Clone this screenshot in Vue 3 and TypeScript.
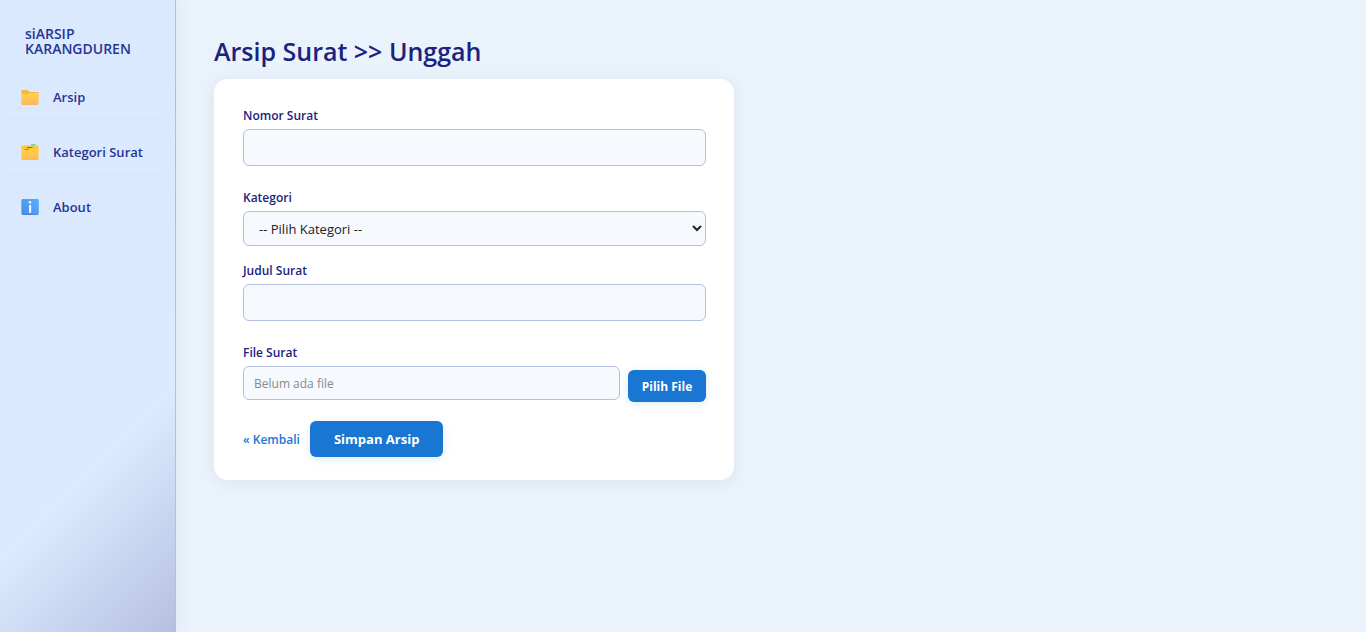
<script setup lang="ts">
import { ref } from 'vue'

interface NavItem {
  label: string
  icon: 'folder' | 'dividers' | 'info'
}

const navItems: NavItem[] = [
  { label: 'Arsip', icon: 'folder' },
  { label: 'Kategori Surat', icon: 'dividers' },
  { label: 'About', icon: 'info' },
]

const nomor = ref('')
const kategori = ref('')
const judul = ref('')
const fileName = ref('')
const picker = ref<HTMLInputElement | null>(null)

function onPick(event: Event) {
  const files = (event.target as HTMLInputElement).files
  fileName.value = files && files.length ? files[0].name : ''
}
</script>

<template>
  <div class="layout">
    <aside class="sidebar">
      <div class="brand">siARSIP<br />KARANGDUREN</div>
      <nav class="nav">
        <a v-for="item in navItems" :key="item.label" href="#" class="nav-link">
          <svg v-if="item.icon === 'folder'" class="nav-icon" viewBox="0 0 18 18" aria-hidden="true">
            <defs>
              <linearGradient id="folderFront" x1="0" y1="0" x2="0" y2="1">
                <stop offset="0" stop-color="#ffd548" />
                <stop offset="1" stop-color="#ffb55c" />
              </linearGradient>
            </defs>
            <path d="M0.5 3Q0.5 2 1.5 2H6.5L8.5 4H16.5Q17.5 4 17.5 5V9H0.5Z" fill="#f6b73c" />
            <path d="M0.5 6H7L9 5H17.5V16Q17.5 17 16.5 17H1.5Q0.5 17 0.5 16Z" fill="url(#folderFront)" />
          </svg>
          <svg v-else-if="item.icon === 'dividers'" class="nav-icon" viewBox="0 0 18 18" aria-hidden="true">
            <defs>
              <linearGradient id="dividerFront" x1="0" y1="0" x2="0" y2="1">
                <stop offset="0" stop-color="#ffd53e" />
                <stop offset="1" stop-color="#ffb957" />
              </linearGradient>
            </defs>
            <rect x="10" y="1" width="4.5" height="3" rx="0.5" fill="#7fd3a8" />
            <path d="M0.5 4Q0.5 2.5 2 2.5H16Q17.5 2.5 17.5 4V10H0.5Z" fill="#fbc63a" />
            <path d="M6 4.5H11.5" stroke="#3f7f9f" stroke-width="1" />
            <path d="M0.5 7.5H8L10 5.5H17.5V16Q17.5 17 16.5 17H1.5Q0.5 17 0.5 16Z" fill="url(#dividerFront)" />
            <path d="M3.5 6.5H8" stroke="#f0703e" stroke-width="1" />
          </svg>
          <svg v-else class="nav-icon" viewBox="0 0 18 18" aria-hidden="true">
            <defs>
              <linearGradient id="infoTile" x1="1" y1="0" x2="0" y2="1">
                <stop offset="0" stop-color="#56b0fb" />
                <stop offset="1" stop-color="#4a8ee8" />
              </linearGradient>
            </defs>
            <rect x="0.5" y="1" width="17" height="16" rx="1.5" fill="#3b83d3" />
            <rect x="1.2" y="1" width="16.3" height="15.2" rx="1.2" fill="url(#infoTile)" />
            <circle cx="9" cy="4.3" r="1.3" fill="#f1f4ff" />
            <rect x="8" y="6.8" width="2.2" height="8.2" rx="1" fill="#f1f4ff" />
          </svg>
          <span>{{ item.label }}</span>
        </a>
      </nav>
    </aside>

    <main class="content">
      <h1 class="title">Arsip Surat &gt;&gt; Unggah</h1>
      <form class="card" @submit.prevent>
        <div class="field">
          <label for="nomor">Nomor Surat</label>
          <input id="nomor" v-model="nomor" class="control" type="text" />
        </div>
        <div class="field field-select">
          <label for="kategori">Kategori</label>
          <select id="kategori" v-model="kategori" class="control">
            <option value="">-- Pilih Kategori --</option>
          </select>
        </div>
        <div class="field">
          <label for="judul">Judul Surat</label>
          <input id="judul" v-model="judul" class="control" type="text" />
        </div>
        <div class="field field-file">
          <label for="file-name">File Surat</label>
          <div class="file-row">
            <input id="file-name" class="control" type="text" :value="fileName" placeholder="Belum ada file" readonly />
            <input ref="picker" type="file" hidden @change="onPick" />
            <button type="button" class="btn btn-pick" @click="picker?.click()">Pilih File</button>
          </div>
        </div>
        <div class="actions">
          <a href="#" class="back">« Kembali</a>
          <button type="submit" class="btn btn-save">Simpan Arsip</button>
        </div>
      </form>
    </main>
  </div>
</template>

<style>
body {
  margin: 0;
  background: #eaf2fb;
}
</style>

<style scoped>
.layout {
  display: flex;
  min-height: 100vh;
  font-family: 'Segoe UI', 'Open Sans', 'Noto Sans', sans-serif;
  color: #1a237e;
  background: #eaf2fb;
}

.sidebar {
  box-sizing: border-box;
  flex: 0 0 176px;
  padding-top: 26px;
  border-right: 1px solid #b3bfe0;
  background: linear-gradient(135deg, #dbe9ff 0%, #dbeaff 70%, #b5c0e0 100%);
  box-shadow: 2px 0 16px rgba(26, 35, 126, 0.06);
}

.brand {
  padding-left: 25px;
  font-size: 14px;
  font-weight: 600;
  line-height: 15px;
  color: #283593;
}

.nav {
  display: flex;
  flex-direction: column;
  gap: 13px;
  margin-top: 20px;
}

.nav-link {
  display: flex;
  align-items: center;
  gap: 14px;
  height: 42px;
  padding-left: 21px;
  border-radius: 8px;
  font-size: 13px;
  font-weight: 600;
  color: #283593;
  text-decoration: none;
  box-shadow: 0 1px 4px rgba(26, 35, 126, 0.02);
}

.nav-icon {
  width: 18px;
  height: 18px;
}

.content {
  flex: 1;
  padding: 33px 38px;
}

.title {
  margin: 0 0 10px;
  font-size: 25px;
  font-weight: 600;
  line-height: 36px;
}

.card {
  box-sizing: border-box;
  max-width: 520px;
  padding: 26px 28px 23px 29px;
  border-radius: 14px;
  background: #fff;
  box-shadow: 0 2px 16px rgba(30, 60, 120, 0.07);
}

.field {
  display: flex;
  flex-direction: column;
  gap: 2px;
  margin-bottom: 21px;
}

.field-select {
  margin-bottom: 14px;
}

.field-file {
  margin-bottom: 19px;
}

label {
  font-size: 12px;
  font-weight: 600;
  line-height: 22px;
}

.control {
  box-sizing: border-box;
  width: 100%;
  height: 37px;
  padding: 0 10px;
  border: 1px solid #b3c0e0;
  border-radius: 6px;
  background: #f6f9fe;
  font-family: inherit;
  font-size: 12px;
  color: #222;
  outline: none;
}

select.control {
  height: 35px;
  padding: 0 0 0 11px;
  font-size: 13px;
}

.file-row {
  display: flex;
  align-items: flex-start;
  gap: 8px;
}

.file-row .control {
  flex: 1;
  height: 34px;
}

.control::placeholder {
  color: #8a8a8a;
}

.btn {
  border: none;
  border-radius: 6px;
  background: #1976d2;
  font-family: inherit;
  font-weight: 700;
  color: #fff;
  cursor: pointer;
  box-shadow: 0 2px 8px rgba(25, 118, 210, 0.15);
}

.btn-pick {
  width: 78px;
  height: 32px;
  margin-top: 4px;
  padding: 0;
  font-size: 12px;
}

.actions {
  display: flex;
  align-items: center;
  gap: 10px;
}

.back {
  font-size: 12px;
  font-weight: 600;
  color: #1976d2;
  text-decoration: none;
}

.btn-save {
  height: 36px;
  padding: 0 24px;
  font-size: 13px;
}
</style>
